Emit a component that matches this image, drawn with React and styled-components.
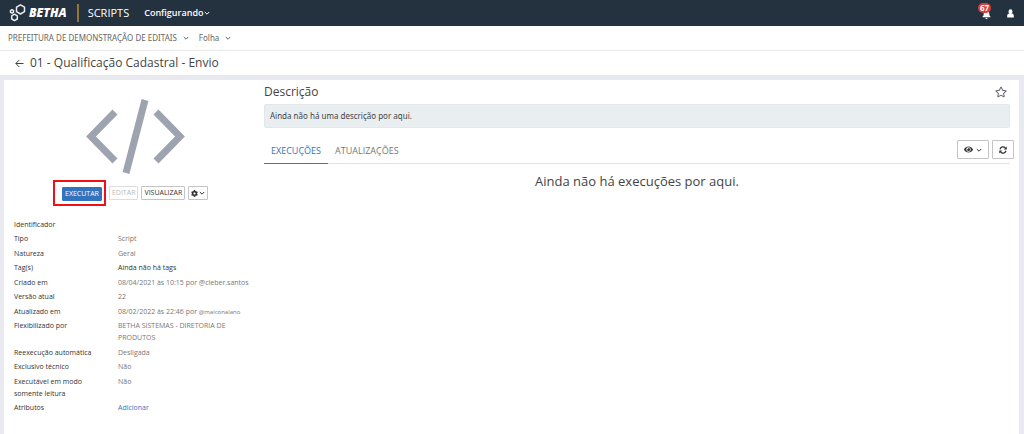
import React from "react";
import styled, { createGlobalStyle, css } from "styled-components";
import { FaBell, FaCog, FaEye, FaRegStar } from "react-icons/fa";

const wideText = '"Noto Sans", "Open Sans", sans-serif';

const GlobalStyle = createGlobalStyle`
  *, *::before, *::after { box-sizing: border-box; }
  body { margin: 0; background: #e9eaef; color: #444; font: 8px/12px "Open Sans", "Noto Sans", sans-serif; }
  button { font: inherit; margin: 0; cursor: pointer; }
  h1, h2, p, dl, dt, dd { margin: 0; font-weight: 400; }
  a { color: inherit; text-decoration: none; }
  svg { display: block; flex: none; }
`;

const Page = styled.div`
  display: flex;
  flex-direction: column;
  min-height: 100vh;
`;

const Header = styled.header`
  display: flex;
  align-items: center;
  height: 26px;
  padding: 0 9px;
  background: #24313f;
  color: #fff;
`;

const Brand = styled.a`
  display: flex;
  align-items: center;
  gap: 3px;
  padding-right: 10px;
  margin-right: 9px;
  border-right: 2px solid #94753a;
  height: 18px;
  font-size: 12px;
  font-weight: 800;
  font-style: italic;
`;

const Product = styled.span`
  font-size: 11px;
  line-height: 16px;
  margin-right: 15px;
`;

const PlainButton = styled.button`
  display: flex;
  align-items: center;
  gap: 6px;
  padding: 0;
  border: 0;
  background: none;
  color: inherit;
  white-space: nowrap;
`;

const MenuButton = styled(PlainButton)`
  gap: 0;
  font-size: 9px;
  font-weight: 600;
`;

const HeaderActions = styled.div`
  display: flex;
  align-items: center;
  gap: 12px;
  margin-left: auto;
`;

const Notifications = styled(PlainButton)`
  position: relative;
  padding: 2px 3px 0 4px;
`;

const Badge = styled.span`
  position: absolute;
  top: -5px;
  left: 0;
  padding: 0 2px;
  border-radius: 5px;
  background: #d9403a;
  font-size: 8px;
  line-height: 10px;
  font-weight: 700;
`;

const Breadcrumb = styled.nav`
  display: flex;
  align-items: center;
  gap: 10px;
  height: 25px;
  padding: 0 8px;
  border-bottom: 1px solid #e8e8ea;
  background: #fff;
  color: #666;
  font-family: ${wideText};
`;

const TitleBar = styled.div`
  display: flex;
  align-items: center;
  gap: 6px;
  height: 24px;
  padding: 0 15px;
  background: #fff;
  color: #444;
  h1 { font-size: 12px; line-height: 18px; }
`;

const Panel = styled.main`
  display: flex;
  flex: 1;
  align-items: flex-start;
  margin: 5px 5px 0 4px;
  background: #fff;
`;

const Sidebar = styled.aside`
  flex: none;
  width: 260px;
  padding-top: 18px;
`;

const ScriptIcon = styled.div`
  display: flex;
  justify-content: center;
  padding-left: 4px;
`;

const Actions = styled.div`
  display: flex;
  align-items: center;
  gap: 3px;
  margin: 5px 0 13px 49px;
`;

const Highlight = styled.div`
  padding: 5px 2px 3px 7px;
  border: 2px solid #f01018;
`;

const Button = styled.button`
  display: flex;
  align-items: center;
  justify-content: center;
  gap: ${({ $large }) => ($large ? 3 : 1)}px;
  height: ${({ $large }) => ($large ? 19 : 14)}px;
  padding: 0 ${({ $large }) => ($large ? 6 : 2)}px;
  border: 1px solid #c4c4c6;
  border-radius: 1px;
  background: #fff;
  color: #333;
  font-size: 7px;
  line-height: 12px;
  ${({ $primary }) => $primary && css`
    border-color: #3273bd;
    background: #3273bd;
    color: #fff;
  `}
  &:disabled { border-color: #ddd; color: #bbb; cursor: default; }
`;

const Details = styled.dl`
  display: flex;
  flex-direction: column;
  justify-content: space-between;
  min-height: 195px;
  padding-left: 10px;
  font-size: 7px;
  line-height: 12px;
`;

const Detail = styled.div`
  display: grid;
  grid-template-columns: 88px 1fr;
  column-gap: 16px;
  dt { color: #333; }
  dd { color: ${({ $dark }) => ($dark ? "#333" : "#777")}; padding-right: 8px; }
  small { font-size: 6px; }
  a { color: #3a6fc0; }
`;

const Content = styled.section`
  flex: 1;
  min-width: 0;
`;

const SectionHeader = styled.div`
  display: flex;
  align-items: center;
  justify-content: space-between;
  height: 23px;
  margin-bottom: 1px;
  padding-right: 12px;
  color: #444;
  h2 { font-size: 12px; line-height: 18px; }
  button { color: #667; }
`;

const Description = styled.p`
  margin-right: 9px;
  padding: 5px;
  border: 1px solid #e2e7e9;
  border-radius: 2px;
  background: #e9eef0;
  font-family: ${wideText};
`;

const Toolbar = styled.div`
  display: flex;
  align-items: flex-end;
  height: 36px;
  margin-right: 9px;
  border-bottom: 1px solid #e2e2e5;
`;

const Tab = styled.button`
  height: 25px;
  padding: 0 7px;
  margin-bottom: -1px;
  border: 0;
  border-bottom: 1px solid ${({ $active }) => ($active ? "#3a73c0" : "transparent")};
  background: none;
  color: ${({ $active }) => ($active ? "#3a6fc0" : "#777")};
  font-size: 9px;
`;

const Tools = styled.div`
  display: flex;
  gap: 3px;
  margin: 0 -4px 4px auto;
`;

const Empty = styled.p`
  padding: 7px 9px 0 0;
  font-size: 13px;
  line-height: 20px;
  text-align: center;
`;

const Chevron = () => (
  <svg width="6" height="6" viewBox="0 0 6 6" fill="none" stroke="currentColor" aria-hidden="true">
    <path d="M.8 2 3 4.2 5.2 2" />
  </svg>
);

const Logo = () => (
  <svg width="17" height="18" viewBox="0 0 17 18" fill="none" stroke="#e9edf0" strokeWidth="1.5" strokeLinejoin="round" aria-hidden="true">
    <path d="M11.500.8l4 2.300v4.600l-4 2.300-4-2.300V3.100z" />
    <path d="M5.500 10.200l2.800 1.600v3.200l-2.800 1.600-2.800-1.600v-3.200z" />
    <path d="M3 5.700l1.500.9v1.700L3 9.200l-1.500-.9V6.600z" />
  </svg>
);

const Refresh = () => (
  <svg width="8" height="8" viewBox="0 0 16 16" fill="none" stroke="currentColor" strokeWidth="2.400" aria-hidden="true">
    <path d="M2 6.500A6.200 6.200 0 0 1 12.800 4M14 9.500A6.200 6.200 0 0 1 3.200 12" />
    <path d="M15.500.8v6h-6zM.5 15.200v-6h6z" fill="currentColor" stroke="none" />
  </svg>
);

const details = [
  ["Identificador", ""],
  ["Tipo", "Script"],
  ["Natureza", "Geral"],
  ["Tag(s)", "Ainda não há tags", true],
  ["Criado em", "08/04/2021 às 10:15 por @cleber.santos"],
  ["Versão atual", "22"],
  ["Atualizado em", <>08/02/2022 às 22:46 por <small>@maiconalano</small></>],
  ["Flexibilizado por", "BETHA SISTEMAS - DIRETORIA DE PRODUTOS"],
  ["Reexecução automática", "Desligada"],
  ["Exclusivo técnico", "Não"],
  ["Executável em modo somente leitura", "Não"],
  ["Atributos", <a href="#atributos">Adicionar</a>],
];

export default function App() {
  return (
    <Page>
      <GlobalStyle />
      <Header>
        <Brand href="#inicio"><Logo />BETHA</Brand>
        <Product>SCRIPTS</Product>
        <MenuButton>Configurando <Chevron /></MenuButton>
        <HeaderActions>
          <Notifications aria-label="Notificações">
            <FaBell size={9} />
            <Badge>67</Badge>
          </Notifications>
          <PlainButton aria-label="Usuário">
            <svg width="9" height="9" viewBox="0 0 9 9" fill="#fff" aria-hidden="true">
              <ellipse cx="4.5" cy="2.7" rx="2" ry="2.4" />
              <path d="M1.2 8.6V6.8c0-1.3.7-2.2 1.8-2.4h3c1.1.2 1.8 1.1 1.8 2.4v1.8z" />
            </svg>
          </PlainButton>
        </HeaderActions>
      </Header>
      <Breadcrumb>
        <PlainButton>PREFEITURA DE DEMONSTRAÇÃO DE EDITAIS <Chevron /></PlainButton>
        <PlainButton>Folha <Chevron /></PlainButton>
      </Breadcrumb>
      <TitleBar>
        <PlainButton aria-label="Voltar">
          <svg width="9" height="9" viewBox="0 0 9 9" fill="none" stroke="currentColor" aria-hidden="true">
            <path d="M8.5 4.5H1M4.3 1 .8 4.5 4.3 8" />
          </svg>
        </PlainButton>
        <h1>01 - Qualificação Cadastral - Envio</h1>
      </TitleBar>
      <Panel>
        <Sidebar>
          <ScriptIcon>
            <svg width="100" height="77" viewBox="0 0 100 77" fill="none" stroke="#9ea3b0" strokeWidth="7" strokeLinejoin="miter" aria-hidden="true">
              <path d="M29 14 5 38.500 29 63M70 14l24 24.500L70 63M59 2 40 75" />
            </svg>
          </ScriptIcon>
          <Actions>
            <Highlight><Button $primary>EXECUTAR</Button></Highlight>
            <Button disabled>EDITAR</Button>
            <Button>VISUALIZAR</Button>
            <Button aria-label="Opções"><FaCog size={7} /><Chevron /></Button>
          </Actions>
          <Details>
            {details.map(([label, value, dark]) => (
              <Detail key={label} $dark={dark}>
                <dt>{label}</dt>
                <dd>{value}</dd>
              </Detail>
            ))}
          </Details>
        </Sidebar>
        <Content>
          <SectionHeader>
            <h2>Descrição</h2>
            <PlainButton aria-label="Favoritar"><FaRegStar size={12} /></PlainButton>
          </SectionHeader>
          <Description>Ainda não há uma descrição por aqui.</Description>
          <Toolbar>
            <Tab $active>EXECUÇÕES</Tab>
            <Tab>ATUALIZAÇÕES</Tab>
            <Tools>
              <Button $large aria-label="Exibir"><FaEye size={9} /><Chevron /></Button>
              <Button $large aria-label="Atualizar"><Refresh /></Button>
            </Tools>
          </Toolbar>
          <Empty>Ainda não há execuções por aqui.</Empty>
        </Content>
      </Panel>
    </Page>
  );
}
